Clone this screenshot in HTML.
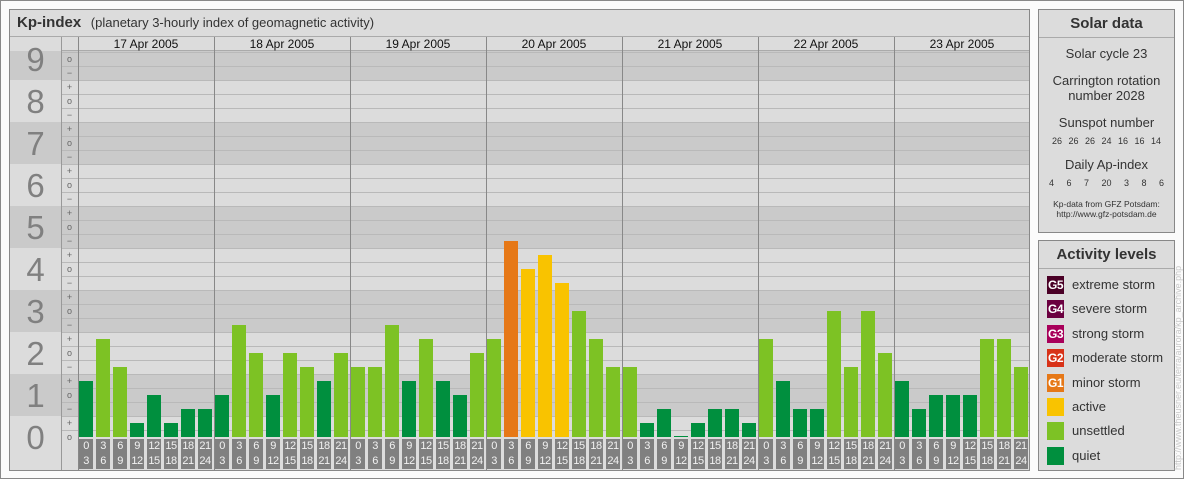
<!DOCTYPE html>
<html><head><meta charset="utf-8">
<style>
*{box-sizing:border-box;margin:0;padding:0}
body{width:1184px;height:480px;background:#fff;position:relative;overflow:hidden;font-family:"Liberation Sans",sans-serif}
.abs{position:absolute}
#outer{left:0;top:0;width:1184px;height:479px;border:1px solid #888;background:#fbfbfb}
#main{left:9px;top:9px;width:1021px;height:462px;border:1px solid #888;background:#dcdcdc}
#title{left:10px;top:10px;width:1019px;height:27px;background:#dcdcdc;border-bottom:1px solid #aaa;font-size:13px;color:#333;line-height:26px;padding-left:7px}
#title b{font-size:15px;color:#333;margin-right:6px}
#bands{left:10px;top:51px;width:1019px;height:419px;background:linear-gradient(to bottom,#cacaca 0,#cacaca 29px,#dcdcdc 29px,#dcdcdc 71px,#cacaca 71px,#cacaca 113px,#dcdcdc 113px,#dcdcdc 155px,#cacaca 155px,#cacaca 197px,#dcdcdc 197px,#dcdcdc 239px,#cacaca 239px,#cacaca 281px,#dcdcdc 281px,#dcdcdc 323px,#cacaca 323px,#cacaca 365px,#dcdcdc 365px)}
#grid{left:61px;top:51px;width:968px;height:386px;background:repeating-linear-gradient(to top,transparent 0,transparent 6px,#b9b9b9 6px,#b9b9b9 7px,transparent 7px,transparent 14px)}
#hdr{left:61px;top:37px;width:968px;height:14px;background:#dcdcdc;border-bottom:1px solid #aaa}
.vl{top:37px;width:1px;height:433px;background:#888}
.date{top:37px;width:136px;text-align:center;font-size:12px;line-height:15px;color:#111}
.dig{left:10px;width:51px;text-align:center;font-size:33px;color:#808080;line-height:34px}
.sg{left:61px;width:17px;text-align:center;font-size:9px;color:#666;line-height:10px}
.day{top:51px;height:386px;width:136px;display:flex;align-items:flex-end;padding-left:1px;gap:3px}
.day div{width:14px}
.q{background:#008f3e}.u{background:#7dc224}.a{background:#f9c300}.g{background:#e67817}
.ax{top:439px;width:136px;display:flex;padding-left:1px;gap:3px}
.ax div{width:14px;height:30px;background:#808080;color:#f2f2f2;font-size:11px;line-height:15px;text-align:center;letter-spacing:-0.5px}
.panel{left:1038px;width:137px;border:1px solid #888;background:#dcdcdc;color:#333;text-align:center}
.ph{height:28px;border-bottom:1px solid #aaa;font-weight:bold;font-size:15px;line-height:28px}
.leg{position:absolute;left:8px;font-size:13px;color:#333;line-height:18px;text-align:left}
.leg span{display:inline-block;width:17px;height:18px;color:#fff;font-size:12px;font-weight:bold;text-align:center;margin-right:8px;vertical-align:top;letter-spacing:-0.5px}
</style></head><body>
<div id="outer" class="abs"></div>
<div id="main" class="abs"></div>
<div id="title" class="abs"><b>Kp-index</b> (planetary 3-hourly index of geomagnetic activity)</div>
<div id="bands" class="abs"></div>
<div id="grid" class="abs"></div>
<div id="hdr" class="abs"></div>
<div class="abs" style="left:61px;top:37px;width:1px;height:433px;background:#999"></div>
<div class="abs vl" style="left:78px"></div>
<div class="abs vl" style="left:214px"></div>
<div class="abs vl" style="left:350px"></div>
<div class="abs vl" style="left:486px"></div>
<div class="abs vl" style="left:622px"></div>
<div class="abs vl" style="left:758px"></div>
<div class="abs vl" style="left:894px"></div>
<div class="abs date" style="left:78px">17 Apr 2005</div>
<div class="abs date" style="left:214px">18 Apr 2005</div>
<div class="abs date" style="left:350px">19 Apr 2005</div>
<div class="abs date" style="left:486px">20 Apr 2005</div>
<div class="abs date" style="left:622px">21 Apr 2005</div>
<div class="abs date" style="left:758px">22 Apr 2005</div>
<div class="abs date" style="left:894px">23 Apr 2005</div>

<div class="abs dig" style="top:43px">9</div>
<div class="abs dig" style="top:85px">8</div>
<div class="abs dig" style="top:127px">7</div>
<div class="abs dig" style="top:169px">6</div>
<div class="abs dig" style="top:211px">5</div>
<div class="abs dig" style="top:253px">4</div>
<div class="abs dig" style="top:295px">3</div>
<div class="abs dig" style="top:337px">2</div>
<div class="abs dig" style="top:379px">1</div>
<div class="abs dig" style="top:421px">0</div>

<div class="abs sg" style="top:54px">o</div>
<div class="abs sg" style="top:68px">−</div>
<div class="abs sg" style="top:82px">+</div>
<div class="abs sg" style="top:96px">o</div>
<div class="abs sg" style="top:110px">−</div>
<div class="abs sg" style="top:124px">+</div>
<div class="abs sg" style="top:138px">o</div>
<div class="abs sg" style="top:152px">−</div>
<div class="abs sg" style="top:166px">+</div>
<div class="abs sg" style="top:180px">o</div>
<div class="abs sg" style="top:194px">−</div>
<div class="abs sg" style="top:208px">+</div>
<div class="abs sg" style="top:222px">o</div>
<div class="abs sg" style="top:236px">−</div>
<div class="abs sg" style="top:250px">+</div>
<div class="abs sg" style="top:264px">o</div>
<div class="abs sg" style="top:278px">−</div>
<div class="abs sg" style="top:292px">+</div>
<div class="abs sg" style="top:306px">o</div>
<div class="abs sg" style="top:320px">−</div>
<div class="abs sg" style="top:334px">+</div>
<div class="abs sg" style="top:348px">o</div>
<div class="abs sg" style="top:362px">−</div>
<div class="abs sg" style="top:376px">+</div>
<div class="abs sg" style="top:390px">o</div>
<div class="abs sg" style="top:404px">−</div>
<div class="abs sg" style="top:418px">+</div>
<div class="abs sg" style="top:432px">o</div>

<div class="abs day" style="left:78px"><div class="q" style="height:56px"></div><div class="u" style="height:98px"></div><div class="u" style="height:70px"></div><div class="q" style="height:14px"></div><div class="q" style="height:42px"></div><div class="q" style="height:14px"></div><div class="q" style="height:28px"></div><div class="q" style="height:28px"></div></div>
<div class="abs day" style="left:214px"><div class="q" style="height:42px"></div><div class="u" style="height:112px"></div><div class="u" style="height:84px"></div><div class="q" style="height:42px"></div><div class="u" style="height:84px"></div><div class="u" style="height:70px"></div><div class="q" style="height:56px"></div><div class="u" style="height:84px"></div></div>
<div class="abs day" style="left:350px"><div class="u" style="height:70px"></div><div class="u" style="height:70px"></div><div class="u" style="height:112px"></div><div class="q" style="height:56px"></div><div class="u" style="height:98px"></div><div class="q" style="height:56px"></div><div class="q" style="height:42px"></div><div class="u" style="height:84px"></div></div>
<div class="abs day" style="left:486px"><div class="u" style="height:98px"></div><div class="g" style="height:196px"></div><div class="a" style="height:168px"></div><div class="a" style="height:182px"></div><div class="a" style="height:154px"></div><div class="u" style="height:126px"></div><div class="u" style="height:98px"></div><div class="u" style="height:70px"></div></div>
<div class="abs day" style="left:622px"><div class="u" style="height:70px"></div><div class="q" style="height:14px"></div><div class="q" style="height:28px"></div><div class="q" style="height:1px"></div><div class="q" style="height:14px"></div><div class="q" style="height:28px"></div><div class="q" style="height:28px"></div><div class="q" style="height:14px"></div></div>
<div class="abs day" style="left:758px"><div class="u" style="height:98px"></div><div class="q" style="height:56px"></div><div class="q" style="height:28px"></div><div class="q" style="height:28px"></div><div class="u" style="height:126px"></div><div class="u" style="height:70px"></div><div class="u" style="height:126px"></div><div class="u" style="height:84px"></div></div>
<div class="abs day" style="left:894px"><div class="q" style="height:56px"></div><div class="q" style="height:28px"></div><div class="q" style="height:42px"></div><div class="q" style="height:42px"></div><div class="q" style="height:42px"></div><div class="u" style="height:98px"></div><div class="u" style="height:98px"></div><div class="u" style="height:70px"></div></div>

<div class="abs ax" style="left:78px"><div>0<br>3</div><div>3<br>6</div><div>6<br>9</div><div>9<br>12</div><div>12<br>15</div><div>15<br>18</div><div>18<br>21</div><div>21<br>24</div></div>
<div class="abs ax" style="left:214px"><div>0<br>3</div><div>3<br>6</div><div>6<br>9</div><div>9<br>12</div><div>12<br>15</div><div>15<br>18</div><div>18<br>21</div><div>21<br>24</div></div>
<div class="abs ax" style="left:350px"><div>0<br>3</div><div>3<br>6</div><div>6<br>9</div><div>9<br>12</div><div>12<br>15</div><div>15<br>18</div><div>18<br>21</div><div>21<br>24</div></div>
<div class="abs ax" style="left:486px"><div>0<br>3</div><div>3<br>6</div><div>6<br>9</div><div>9<br>12</div><div>12<br>15</div><div>15<br>18</div><div>18<br>21</div><div>21<br>24</div></div>
<div class="abs ax" style="left:622px"><div>0<br>3</div><div>3<br>6</div><div>6<br>9</div><div>9<br>12</div><div>12<br>15</div><div>15<br>18</div><div>18<br>21</div><div>21<br>24</div></div>
<div class="abs ax" style="left:758px"><div>0<br>3</div><div>3<br>6</div><div>6<br>9</div><div>9<br>12</div><div>12<br>15</div><div>15<br>18</div><div>18<br>21</div><div>21<br>24</div></div>
<div class="abs ax" style="left:894px"><div>0<br>3</div><div>3<br>6</div><div>6<br>9</div><div>9<br>12</div><div>12<br>15</div><div>15<br>18</div><div>18<br>21</div><div>21<br>24</div></div>

<div class="abs panel" style="top:9px;height:224px">
<div class="ph">Solar data</div>
<div style="font-size:13px;margin-top:8px;line-height:15px">Solar cycle 23</div>
<div style="font-size:13px;margin-top:12px;line-height:15px">Carrington rotation<br>number 2028</div>
<div style="font-size:13px;margin-top:12px;line-height:15px">Sunspot number</div>
<div style="font-size:9px;margin-top:6px;word-spacing:4px">26 26 26 24 16 16 14</div>
<div style="font-size:13px;margin-top:11px;line-height:15px">Daily Ap-index</div>
<div style="font-size:9px;margin-top:6px;word-spacing:10px">4 6 7 20 3 8 6</div>
<div style="font-size:8.5px;margin-top:11px;line-height:10px">Kp-data from GFZ Potsdam:<br>http://www.gfz-potsdam.de</div>
</div>

<div class="abs panel" style="top:240px;height:231px">
<div class="ph">Activity levels</div>
<div class="leg" style="top:35px"><span style="background:#4a0026">G5</span>extreme storm</div>
<div class="leg" style="top:59px"><span style="background:#6b0040">G4</span>severe storm</div>
<div class="leg" style="top:84px"><span style="background:#a8005a">G3</span>strong storm</div>
<div class="leg" style="top:108px"><span style="background:#d83218">G2</span>moderate storm</div>
<div class="leg" style="top:133px"><span style="background:#e67817">G1</span>minor storm</div>
<div class="leg" style="top:157px"><span style="background:#f9c300"></span>active</div>
<div class="leg" style="top:181px"><span style="background:#7dc225"></span>unsettled</div>
<div class="leg" style="top:206px"><span style="background:#008f3e"></span>quiet</div>
</div>

<div class="abs" style="left:1172px;top:470px;width:230px;height:12px;transform:rotate(-90deg);transform-origin:0 0;font-size:9px;color:#c8c8c8;white-space:nowrap;line-height:12px">http://www.theusner.eu/terra/aurora/kp_archive.php</div>
</body></html>
